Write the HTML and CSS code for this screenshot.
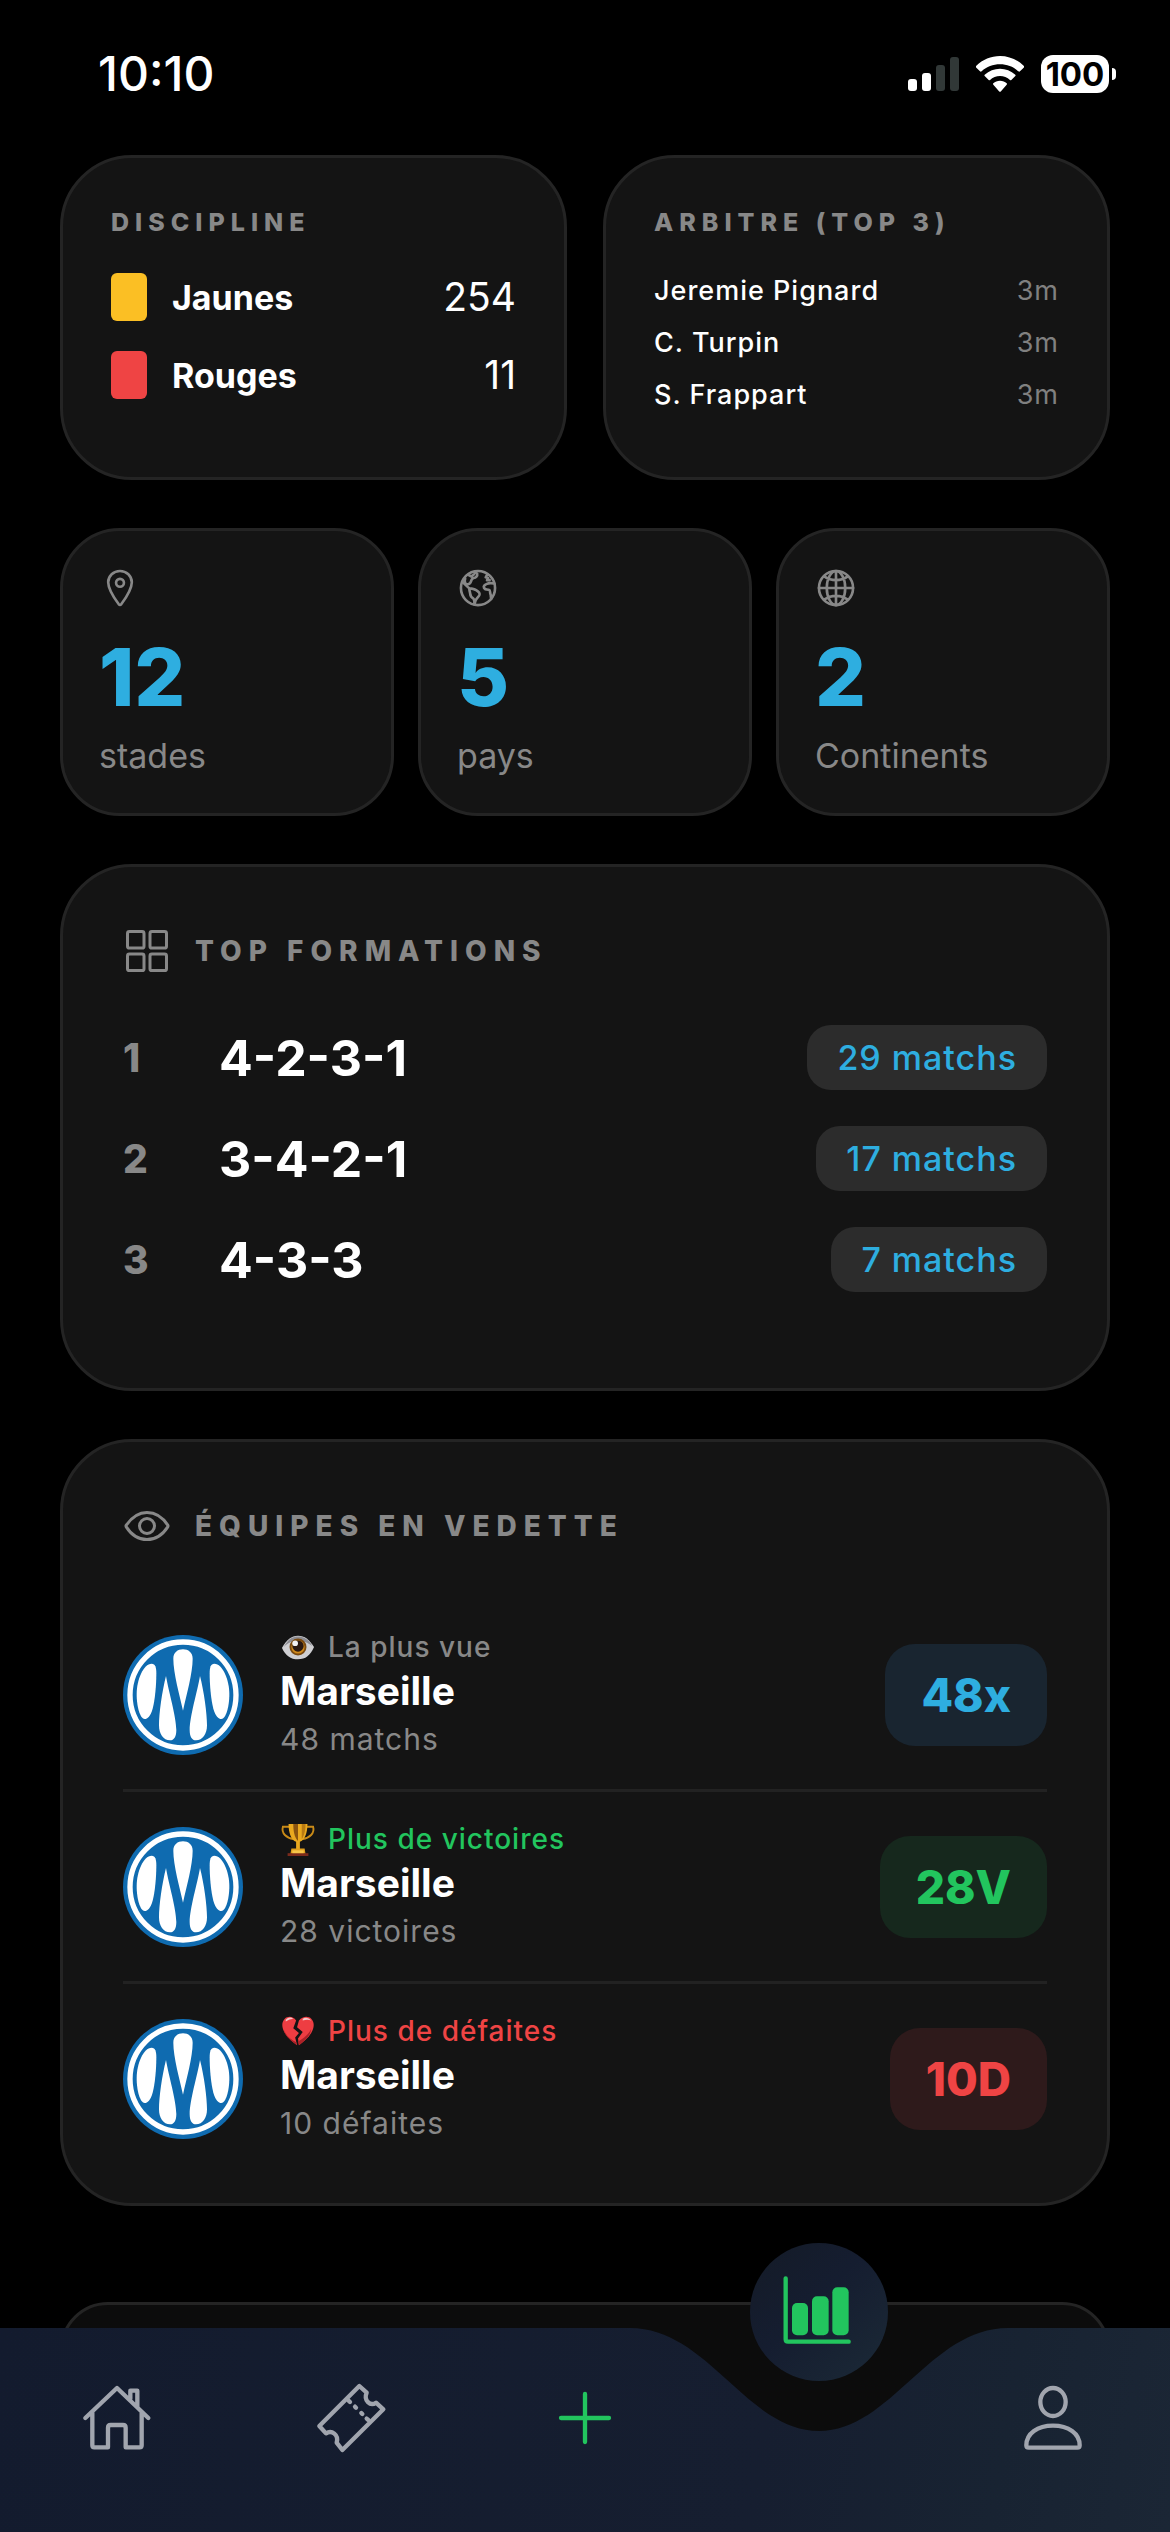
FILE: index.html
```html
<!DOCTYPE html>
<html lang="fr">
<head>
<meta charset="utf-8">
<meta name="viewport" content="width=device-width, initial-scale=1">
<title>Statistiques</title>
<link rel="stylesheet" href="styles.css">
</head>
<body>
<svg class="defs" aria-hidden="true">
  <symbol id="crest" viewBox="39 45 360 360">
    <circle cx="219" cy="225" r="180" fill="#0f6bb0"/>
    <circle cx="219" cy="225" r="159" fill="none" stroke="#fff" stroke-width="16"/>
    <g fill="#fff">
      <path d="M219 272C209 225 190 160 190 116C190 98 203 88 219 88S248 98 248 116C248 160 229 225 219 272z"/>
      <path id="side" d="M125 131C136 131 139 142 139 160C139 195 135 240 128 266C122 288 112 297 104 297C91 297 80 262 80 222C80 180 100 131 125 131z"/>
      <path id="low" d="M168 168C176 215 199 290 199 330C199 350 192 361 180 361C160 361 147 342 147 316C147 280 156 215 168 168z"/>
      <use href="#side" transform="translate(438 0) scale(-1 1)"/>
      <use href="#low" transform="translate(438 0) scale(-1 1)"/>
    </g>
  </symbol>
</svg>

<header class="status">
  <time class="status-time">10:10</time>
  <div class="status-icons">
    <svg class="signal" viewBox="0 0 51 34" aria-hidden="true">
      <rect x="0" y="22" width="9" height="12" rx="3" fill="#fff"/>
      <rect x="14" y="16" width="9" height="18" rx="3" fill="#fff"/>
      <rect x="28" y="8" width="9" height="26" rx="3" fill="#313837"/>
      <rect x="42" y="0" width="9" height="34" rx="3" fill="#313837"/>
    </svg>
    <svg class="wifi" viewBox="0 0 144 108" aria-hidden="true" fill="#fff">
      <path d="M72 0C99 0 124 11 143 29Q146 32 143 35L132 46Q130 48 127 46C112 32 93 25 72 25S32 32 17 46Q14 48 12 46L1 35Q-2 32 1 29C20 11 45 0 72 0z"/>
      <path d="M72 38C89 38 105 44 118 56Q120 58 118 60L106 72Q104 74 102 72C94 64 83 60 72 60S50 64 42 72Q40 74 38 72L26 60Q24 58 26 56C39 44 55 38 72 38z"/>
      <path d="M72 74C80 74 87 77 92 82Q94 84 92 86L75 106Q72 109 69 106L52 86Q50 84 52 82C57 77 64 74 72 74z"/>
    </svg>
    <div class="battery"><span class="battery-level">100</span><span class="battery-tip"></span></div>
  </div>
</header>

<main class="content">
  <section class="pair">
    <article class="card mini">
      <h2 class="mini-title">DISCIPLINE</h2>
      <ul class="list cards-list">
        <li class="line"><span class="swatch yellow"></span><span class="card-name">Jaunes</span><span class="card-count">254</span></li>
        <li class="line"><span class="swatch red"></span><span class="card-name">Rouges</span><span class="card-count">11</span></li>
      </ul>
    </article>
    <article class="card mini">
      <h2 class="mini-title">ARBITRE (TOP 3)</h2>
      <ul class="list referees">
        <li class="line"><span>Jeremie Pignard</span><span class="muted">3m</span></li>
        <li class="line"><span>C. Turpin</span><span class="muted">3m</span></li>
        <li class="line"><span>S. Frappart</span><span class="muted">3m</span></li>
      </ul>
    </article>
  </section>

  <section class="trio">
    <article class="card stat">
      <svg class="stat-icon" viewBox="0 0 512 512" aria-hidden="true">
        <path d="M256 48c-79.5 0-144 61.39-144 137 0 87 96 224.87 131.25 272.49a15.77 15.77 0 0025.5 0C304 409.89 400 272.07 400 185c0-75.61-64.5-137-144-137z"/>
        <circle cx="256" cy="192" r="48"/>
      </svg>
      <strong class="stat-value">12</strong>
      <span class="stat-label">stades</span>
    </article>
    <article class="card stat">
      <svg class="stat-icon" viewBox="0 0 512 512" aria-hidden="true">
        <circle cx="256" cy="256" r="208"/>
        <path d="M76 190C90 210 110 224 150 260M100 140C92 160 86 190 108 208C130 218 162 206 168 182C174 160 180 136 206 134C228 132 252 108 246 82L214 62M138 96L176 116L206 90M150 260C176 262 214 268 228 280C254 296 284 312 274 340C264 366 232 384 226 410L212 456C214 430 214 402 200 386C176 372 162 352 160 322C158 300 148 282 150 260zM366 96L350 126L378 134L366 162L398 160M456 202C430 196 392 192 364 206C336 218 318 234 330 256C342 278 366 276 388 278C410 282 398 312 410 336C414 360 412 380 418 388"/>
      </svg>
      <strong class="stat-value">5</strong>
      <span class="stat-label">pays</span>
    </article>
    <article class="card stat">
      <svg class="stat-icon" viewBox="0 0 512 512" aria-hidden="true">
        <circle cx="256" cy="256" r="208"/>
        <path d="M256 48c-58.07 0-112.67 93.13-112.67 208S197.93 464 256 464s112.67-93.13 112.67-208S314.07 48 256 48zM117.33 117.33c38.24 27.15 86.38 43.34 138.67 43.34s100.43-16.19 138.67-43.34M394.67 394.67c-38.24-27.15-86.38-43.34-138.67-43.34s-100.43 16.19-138.67 43.34M256 48v416M464 256H48"/>
      </svg>
      <strong class="stat-value">2</strong>
      <span class="stat-label">Continents</span>
    </article>
  </section>

  <section class="card panel formations">
    <header class="panel-head">
      <svg class="panel-icon" viewBox="0 0 512 512" aria-hidden="true">
        <rect x="48" y="48" width="176" height="176" rx="20"/><rect x="288" y="48" width="176" height="176" rx="20"/>
        <rect x="48" y="288" width="176" height="176" rx="20"/><rect x="288" y="288" width="176" height="176" rx="20"/>
      </svg>
      <h2 class="panel-title">TOP FORMATIONS</h2>
    </header>
    <ol class="list formation-list">
      <li class="line"><span class="rank">1</span><span class="formation">4-2-3-1</span><span class="pill">29 matchs</span></li>
      <li class="line"><span class="rank">2</span><span class="formation">3-4-2-1</span><span class="pill">17 matchs</span></li>
      <li class="line"><span class="rank">3</span><span class="formation">4-3-3</span><span class="pill">7 matchs</span></li>
    </ol>
  </section>

  <section class="card panel teams">
    <header class="panel-head">
      <svg class="panel-icon" viewBox="0 0 512 512" aria-hidden="true">
        <path d="M255.66 112c-77.94 0-157.89 45.11-220.83 135.33a16 16 0 00-.27 17.77C82.92 340.8 161.8 400 255.66 400c92.84 0 173.34-59.38 221.79-135.25a16.14 16.14 0 000-17.47C428.89 172.28 347.8 112 255.66 112z"/>
        <circle cx="256" cy="256" r="80"/>
      </svg>
      <h2 class="panel-title">ÉQUIPES EN VEDETTE</h2>
    </header>
    <ul class="list">
      <li class="team">
        <svg class="crest" role="img" aria-label="Marseille"><use href="#crest"/></svg>
        <div class="team-text">
          <p class="team-tag">
            <svg class="emoji" viewBox="0 0 36 36" aria-hidden="true">
              <path d="M1 19C6 10 11 6 18 6S30 10 35 18C31 27 26 31 18 31S5 27 1 19z" fill="#cfcfd2"/>
              <path d="M3 18C8 9 13 7 18 7S29 9 33 17C28 13 24 12 18 12S8 13 3 18z" fill="#8c8c92"/>
              <circle cx="18" cy="18" r="9" fill="#7a4a10"/><circle cx="18" cy="18" r="7" fill="#d18b1c"/>
              <circle cx="18" cy="17" r="6" fill="#2b1a12"/><circle cx="15" cy="14" r="3" fill="#f2f2f4"/>
            </svg>La plus vue</p>
          <h3 class="team-name">Marseille</h3>
          <p class="team-detail">48 matchs</p>
        </div>
        <strong class="score blue">48x</strong>
      </li>
      <li class="team">
        <svg class="crest" role="img" aria-label="Marseille"><use href="#crest"/></svg>
        <div class="team-text">
          <p class="team-tag green-text">
            <svg class="emoji" viewBox="0 0 36 36" aria-hidden="true">
              <path d="M9 5H2C0 12 6 17 13 18M27 5H34C36 12 30 17 23 18" fill="none" stroke="#c98a17" stroke-width="2"/>
              <path d="M8 2H28C28 12 25 19 20 21V29H16V21C11 19 8 12 8 2z" fill="#eaa91f"/>
              <path d="M13 2H18V20C14 16 13 9 13 2z" fill="#8a5410"/><path d="M22 2H26C26 10 24 15 22 18z" fill="#b97a12"/>
              <path d="M11 28H25L26 34H10z" fill="#e2a01d"/><path d="M7 33H29V36H7z" fill="#7a2a1c"/><path d="M12 30H24V33H12z" fill="#f7c64a"/>
            </svg>Plus de victoires</p>
          <h3 class="team-name">Marseille</h3>
          <p class="team-detail">28 victoires</p>
        </div>
        <strong class="score green">28V</strong>
      </li>
      <li class="team">
        <svg class="crest" role="img" aria-label="Marseille"><use href="#crest"/></svg>
        <div class="team-text">
          <p class="team-tag red-text">
            <svg class="emoji" viewBox="0 0 36 36" aria-hidden="true">
              <path d="M16 7C13 2 7 2 4 5C0 9 1 15 4 20C7 25 12 29 17 33L15 25L19 20L13 15z" fill="#ee3d42"/>
              <path d="M19 7C23 2 29 2 32 5C36 9 35 15 32 20C29 25 24 29 19 33L18 26L23 19L17 14z" fill="#ee3d42"/>
              <path d="M32 16C31 24 24 29 19 33L18 29C24 26 29 22 32 16zM3 17C6 24 11 27 16 30L17 33C10 28 4 23 3 17z" fill="#ad2127"/>
              <path d="M5 6Q9 2 13 5Q9 5 5 8zM23 5Q28 2 32 7Q28 5 23 7z" fill="#f3c9cb"/>
            </svg>Plus de défaites</p>
          <h3 class="team-name">Marseille</h3>
          <p class="team-detail">10 défaites</p>
        </div>
        <strong class="score crimson">10D</strong>
      </li>
    </ul>
  </section>

  <section class="card next-card"></section>
</main>

<nav class="tabbar">
  <svg class="tabbar-shape" viewBox="0 0 1170 204" preserveAspectRatio="none" aria-hidden="true">
    <defs>
      <linearGradient id="bar" gradientUnits="userSpaceOnUse" x1="0" y1="0" x2="1170" y2="204">
        <stop offset="0" stop-color="#131b2e"/><stop offset=".65" stop-color="#161e30"/><stop offset=".85" stop-color="#182332"/><stop offset="1" stop-color="#1b2635"/>
      </linearGradient>
    </defs>
    <path d="M0 0H630C708 0 747 103 819 103S930 0 1008 0H1170V204H0z" fill="url(#bar)"/>
  </svg>
  <a class="tab" href="#accueil" aria-label="Accueil">
    <svg class="tab-icon" viewBox="0 0 216 216" aria-hidden="true"><path d="M13 108L108 18L202 108M34 92V190Q34 196 40 196H81V137Q81 129 89 129H126Q134 129 134 137V196H176Q182 196 182 190V92M148 50V26H169V74"/></svg>
  </a>
  <a class="tab" href="#matchs" aria-label="Matchs">
    <svg class="tab-icon" viewBox="0 0 216 216" aria-hidden="true"><path d="M133 12L13 132L33 154C50 143 72 158 65 182L82 204L205 82L183 62C166 74 145 56 155 32zM101 56L105 60M120 74L123 77M139 93L142 96M155 110L160 114"/></svg>
  </a>
  <a class="tab add" href="#ajouter" aria-label="Ajouter">
    <svg class="tab-icon" viewBox="0 0 216 216" aria-hidden="true"><path d="M108 36V180M36 108H180"/></svg>
  </a>
  <a class="tab" href="#stats" aria-label="Statistiques" aria-current="page">
    <span class="bubble">
      <svg class="tab-icon" viewBox="0 0 216 216" aria-hidden="true">
        <path d="M8 7V190Q8 197 15 197H197"/>
        <g class="bars"><rect x="27" y="81" width="48" height="97" rx="15"/><rect x="87" y="61" width="50" height="117" rx="15"/><rect x="148" y="34" width="49" height="144" rx="15"/></g>
      </svg>
    </span>
  </a>
  <a class="tab" href="#profil" aria-label="Profil">
    <svg class="tab-icon" viewBox="0 0 216 216" aria-hidden="true"><ellipse cx="108" cy="60" rx="38" ry="42"/><path d="M28 190C28 154 62 131 108 131S188 154 188 190Q188 197 181 197H35Q28 197 28 190z"/></svg>
  </a>
</nav>
</body>
</html>
```
FILE: styles.css
```css
* {
  box-sizing: border-box;
  margin: 0;
  padding: 0;
}

body {
  background: #000;
  color: #fff;
  font-family: Inter, "Liberation Sans", sans-serif;
  min-height: 100vh;
}

.defs {
  position: absolute;
  width: 0;
  height: 0;
}

/* Status bar */
.status {
  display: flex;
  justify-content: space-between;
  align-items: center;
  height: 155px;
  padding: 0 54px 7px 98px;
}

.status-time {
  font-size: 48px;
  font-weight: 500;
  line-height: 56px;
}

.status-icons {
  display: flex;
  align-items: center;
  gap: 17px;
}

.signal {
  width: 51px;
  height: 34px;
}

.wifi {
  width: 48px;
  height: 36px;
}

.battery {
  display: flex;
  align-items: center;
  gap: 3px;
}

.battery-level {
  width: 68px;
  border-radius: 12px;
  background: #fff;
  color: #000;
  font-size: 33px;
  font-weight: 700;
  line-height: 38px;
  text-align: center;
}

.battery-tip {
  width: 4px;
  height: 12px;
  border-radius: 0 4px 4px 0;
  background: #fff;
}

/* Cards */
.content {
  display: flex;
  flex-direction: column;
  gap: 48px;
  padding: 0 60px;
}

.card {
  border: 3px solid #242424;
  border-radius: 72px;
  background: #141414;
}

.list {
  display: flex;
  flex-direction: column;
  list-style: none;
}

.line {
  display: flex;
  align-items: center;
  justify-content: space-between;
}

.muted {
  color: #808080;
  font-weight: 400;
}

.pair {
  display: grid;
  grid-template-columns: 1fr 1fr;
  gap: 36px;
}

.mini {
  padding: 48px 48px 64px;
}

.mini-title {
  margin-bottom: 35px;
  color: #888;
  font-size: 25px;
  font-weight: 800;
  letter-spacing: 6px;
  line-height: 32px;
}

.cards-list {
  gap: 30px;
}

.swatch {
  width: 36px;
  height: 48px;
  border-radius: 6px;
}

.yellow {
  background: #fbbf24;
}

.red {
  background: #ef4444;
}

.card-name {
  flex: 1;
  padding-left: 25px;
  font-size: 34px;
  font-weight: 700;
}

.card-count {
  font-size: 39px;
  line-height: 48px;
}

.referees {
  gap: 16px;
  font-size: 27px;
  font-weight: 500;
  letter-spacing: 1px;
  line-height: 36px;
}

.trio {
  display: grid;
  grid-template-columns: repeat(3, 1fr);
  gap: 24px;
}

.stat {
  display: flex;
  flex-direction: column;
  padding: 36px;
  border-radius: 60px;
}

.stat-icon,
.panel-icon {
  fill: none;
  stroke: #888;
  stroke-width: 32px;
  stroke-linecap: round;
  stroke-linejoin: round;
}

.stat-icon {
  width: 42px;
  height: 42px;
}

.stat-value {
  margin: 29px 0 19px;
  color: #2eaee0;
  font-size: 80px;
  font-weight: 800;
  line-height: 78px;
}

.stat-label {
  color: #888;
  font-size: 34px;
  line-height: 42px;
}

.panel {
  padding: 60px;
}

.panel-head {
  display: flex;
  align-items: center;
  gap: 24px;
  margin-bottom: 50px;
}

.panel-icon {
  width: 48px;
  height: 48px;
}

.panel-title {
  color: #888;
  font-size: 28px;
  font-weight: 800;
  letter-spacing: 7px;
  line-height: 36px;
}

.formations {
  padding-bottom: 96px;
}

.formation-list {
  gap: 36px;
}

.rank {
  width: 96px;
  color: #888;
  font-size: 39px;
  font-weight: 800;
}

.formation {
  flex: 1;
  font-size: 50px;
  font-weight: 700;
  line-height: 60px;
}

.pill {
  padding: 12px 30px;
  border-radius: 24px;
  background: #2c2c2c;
  color: #2eaee0;
  font-size: 34px;
  font-weight: 500;
  letter-spacing: 1px;
  line-height: 41px;
}

.teams {
  padding-bottom: 30px;
}

.team {
  display: flex;
  align-items: center;
  gap: 37px;
  min-height: 189px;
}

.team:not(:last-child) {
  min-height: 192px;
  border-bottom: 3px solid #222;
}

.crest {
  flex: none;
  width: 120px;
  height: 120px;
}

.team-text {
  flex: 1;
}

.team-tag {
  display: flex;
  align-items: center;
  gap: 12px;
  color: #888;
  font-size: 28px;
  font-weight: 500;
  letter-spacing: 1px;
  line-height: 38px;
}

.emoji {
  width: 36px;
  height: 34px;
}

.green-text {
  color: #22c55e;
}

.red-text {
  color: #ef4444;
}

.team-name {
  font-size: 39px;
  font-weight: 700;
  line-height: 50px;
}

.team-detail {
  color: #888;
  font-size: 30px;
  letter-spacing: 1px;
  line-height: 46px;
}

.score {
  padding: 24px 36px;
  border-radius: 30px;
  font-size: 46px;
  font-weight: 800;
  line-height: 54px;
}

.blue {
  background: #192530;
  color: #2eaee0;
}

.green {
  background: #16281d;
  color: #22c55e;
}

.crimson {
  background: #2e1a1b;
  color: #ef4444;
}

.next-card {
  min-height: 226px;
  margin-top: 48px;
  border-radius: 48px;
  background: #0c0c0c;
}

/* Tab bar, fixed over the scrolling cards */
.tabbar {
  position: fixed;
  right: 0;
  bottom: 0;
  left: 0;
  display: grid;
  grid-template-columns: repeat(5, 1fr);
  height: 204px;
}

.tabbar-shape {
  position: absolute;
  width: 100%;
  height: 100%;
}

.tab {
  position: relative;
  display: flex;
  justify-content: center;
  padding-top: 54px;
}

.tab-icon {
  width: 72px;
  height: 72px;
  fill: none;
  stroke: #a1a5ae;
  stroke-width: 13px;
  stroke-linecap: round;
  stroke-linejoin: round;
}

.add .tab-icon,
.bubble .tab-icon {
  stroke: #22c55e;
}

.bubble .bars {
  fill: #22c55e;
  stroke: none;
}

.bubble {
  position: absolute;
  top: -85px;
  display: flex;
  align-items: center;
  justify-content: center;
  width: 138px;
  height: 138px;
  border-radius: 50%;
  background: linear-gradient(135deg, #141b27, #151d30 45%, #192534 80%, #1b2a39);
}
```
